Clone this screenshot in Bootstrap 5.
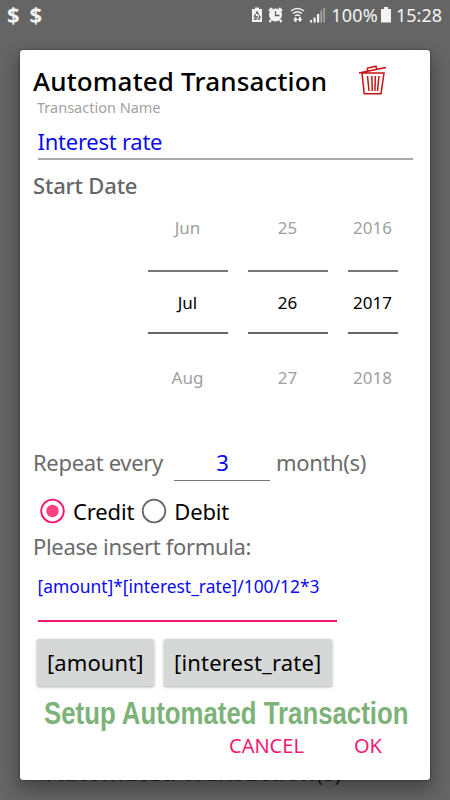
<!DOCTYPE html>
<html lang="en">
<head>
<meta charset="utf-8">
<meta name="viewport" content="width=device-width, initial-scale=1">
<title>Automated Transaction</title>
<link href="https://cdn.jsdelivr.net/npm/bootstrap@5.3.0/dist/css/bootstrap.min.css" rel="stylesheet">
<style>
  body { width: 450px; height: 800px; background: #656565; font-family: "Noto Sans", sans-serif; color: #000; white-space: nowrap; }
  .statusbar { height: 50px; padding: 2px 8px 0 7px; color: #f4f4f4; font-size: 18px; line-height: 27px; }
  .money { font-weight: 700; font-size: 22px; letter-spacing: 10px; line-height: 25px; }
  .status-icons { margin-top: 1px; }
  .pct { margin-left: 5px; letter-spacing: .2px; }
  .dialog { width: 410px; height: 730px; margin-left: 20px; padding: 12px 18px 0 13px; background: #fff; border-radius: 3px; box-shadow: 0 8px 18px 2px rgba(0,0,0,.32), 0 0 2px rgba(0,0,0,.6); z-index: 1; }
  .title { height: 38px; font-size: 26px; font-weight: 500; line-height: 38px; letter-spacing: .16px; }
  .trash { margin-left: 31px; margin-top: 2px; }
  .hint { height: 15px; margin-left: 4px; font-size: 14.5px; line-height: 15px; color: #a2a2a2; }
  .field { color: #0a0af0; }
  .name-field { height: 37px; margin: 8px 0 0 4.5px; width: 375px; font-size: 22px; line-height: 36px; letter-spacing: -.25px; border-bottom: 2px solid #a9a9a9; }
  .heading { height: 49px; font-size: 22px; line-height: 50px; font-weight: 500; letter-spacing: -.2px; color: #666; }
  .picker { margin-left: 114.5px; gap: 20px; font-size: 17px; text-align: center; }
  .wheel { width: 80px; }
  .wheel-year { width: 50px; }
  .wheel-edge { height: 37px; line-height: 37px; color: #a0a0a0; }
  .wheel-mid { height: 64px; margin: 24px 0 25px; line-height: 61px; border-top: 2px solid #777; border-bottom: 2px solid #666; }
  .caption { font-size: 22px; letter-spacing: -.33px; color: #6b6b6b; }
  .repeat { height: 39px; margin-top: 46px; line-height: 41px; }
  .count { width: 96px; height: 39px; margin-left: 11.5px; margin-right: 5.5px; font-size: 22px; text-align: center; border-bottom: 1px solid #777; }
  .kinds { height: 38px; margin: 11px 0 3px 7px; font-size: 22px; letter-spacing: -.15px; line-height: 34px; }
  .credit { margin: 0 7px 0; }
  .debit { margin: 0 0 0 7px; }
  .formula-label { height: 26px; line-height: 26px; }
  .formula { width: 299.5px; height: 56px; margin: 7px 0 17px 4.5px; font-size: 17.400px; line-height: 40px; border-bottom: 2px solid #f0146e; }
  .token { height: 47px; padding: 0 0 0 10px; border: 0; border-radius: 2px; background: #d6d8d7; color: #000; font-size: 22px; line-height: 47px; text-align: left; box-shadow: 0 1px 3px rgba(0,0,0,.35); }
  .token-a { width: 117px; margin-left: 4px; letter-spacing: .1px; }
  .token-b { width: 168px; margin-left: 10px; letter-spacing: .18px; }
  .tagline { height: 37px; margin: 9px 0 0 11px; font: 700 31px/38px "Liberation Sans", Arial, sans-serif; color: #7db279; transform: scaleX(.832); transform-origin: left; }
  .actions { height: 27px; margin-left: 196px; font-size: 20px; line-height: 27px; color: #f21a72; gap: 50px; }
  .behind { position: absolute; left: 47px; top: 754px; font-size: 24px; font-weight: 500; line-height: 36px; color: #262626; }
</style>
</head>
<body class="position-relative overflow-hidden m-0">
  <header class="statusbar d-flex justify-content-between">
    <span class="money">$$</span>
    <div class="d-flex align-items-start">
      <svg class="status-icons" width="76" height="24" viewBox="249 3 76 24" fill="#f4f4f4">
        <path d="M251 9h3V7.500h4V9h3v13h-10z"/>
        <path d="M256 12l3 5h-6zM252.800 19h6.400" fill="none" stroke="#555" stroke-width="1.300" stroke-dasharray="3 1"/>
        <circle cx="274.500" cy="15" r="6.500"/><path d="M268 11l3-3M281 11l-3-3M270 20l-1.500 2M279 20l1.500 2" stroke="#f4f4f4" stroke-width="2.200"/>
        <path d="M274.500 11v4.500h4" fill="none" stroke="#606060" stroke-width="1.300"/>
        <path d="M290 11q6.500-5 13 0M292 13.500q4.500-3.500 9 0M294 16q2.500-2 5 0" fill="none" stroke="#f4f4f4" stroke-width="1.500"/>
        <path d="M294.500 17l2.500 3h-1.500v2h-2v-2H292zM299 22l2.500-3H300v-2h-2v2h-1.500z"/>
        <path d="M309 20h2v2.500h-2zM312.500 17.500h2.200v5h-2.200zM316 14h2.200v8.500H316z"/>
        <path d="M319.500 10.500h1.500v12h-1.500zM322.300 8h1.500v14.500h-1.500z" opacity=".5"/>
      </svg>
      <span class="pct">100%</span>
      <svg class="status-icons" width="14" height="24" viewBox="-3 3 14 24" fill="#f4f4f4"><path d="M0 9h3V7h4v2h3v13.500H0z"/></svg>
      <span class="clock ms-1">15:28</span>
    </div>
  </header>
  <div class="behind">Automated Transaction(s)</div>
  <main class="dialog position-relative">
    <div class="d-flex">
      <h1 class="title m-0">Automated Transaction</h1>
      <svg class="trash" width="29" height="32" viewBox="0 0 29 32" fill="none" stroke="#cb1111" stroke-width="1.500">
        <path d="M1 9L28 3.500M9.500 6.500V4L18 2.200l.5 3M4 9h22l-3 20.700H6.200zM9.500 12l1.500 15M13.800 12l.5 15M17.300 12l-.3 15M21 12l-1.500 15"/>
      </svg>
    </div>
    <div class="hint"><span>Transaction Name</span></div>
    <div class="field name-field"><span>Interest rate</span></div>
    <h2 class="heading m-0"><span>Start Date</span></h2>
    <div class="picker d-flex">
      <div class="wheel"><div class="wheel-edge">Jun</div><div class="wheel-mid">Jul</div><div class="wheel-edge">Aug</div></div>
      <div class="wheel"><div class="wheel-edge">25</div><div class="wheel-mid">26</div><div class="wheel-edge">27</div></div>
      <div class="wheel-year"><div class="wheel-edge">2016</div><div class="wheel-mid">2017</div><div class="wheel-edge">2018</div></div>
    </div>
    <div class="repeat caption d-flex">
      <span>Repeat every</span><span class="count field">3</span><span>month(s)</span>
    </div>
    <div class="kinds d-flex align-items-center">
      <svg width="26" height="26" viewBox="0 0 26 26"><circle cx="12.500" cy="13" r="11.300" fill="none" stroke="#f5146f" stroke-width="1.800"/><circle cx="12.500" cy="13" r="6.200" fill="#ff4081"/></svg>
      <span class="credit">Credit</span>
      <svg width="26" height="26" viewBox="0 0 26 26"><circle cx="13" cy="13" r="11.300" fill="none" stroke="#666" stroke-width="1.800"/></svg>
      <span class="debit">Debit</span>
    </div>
    <div class="formula-label caption"><span>Please insert formula:</span></div>
    <div class="field formula"><span>[amount]*[interest_rate]/100/12*3</span></div>
    <div class="d-flex">
      <button type="button" class="token token-a">[amount]</button>
      <button type="button" class="token token-b">[interest_rate]</button>
    </div>
    <div class="tagline">Setup Automated Transaction</div>
    <div class="actions d-flex"><span>CANCEL</span><span>OK</span></div>
  </main>
</body>
</html>
